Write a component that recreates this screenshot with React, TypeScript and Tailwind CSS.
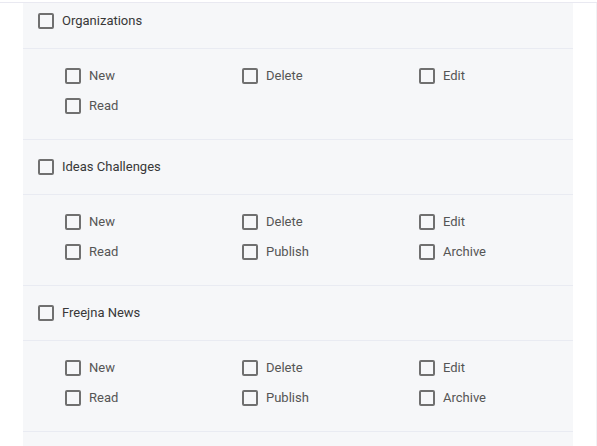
import React from 'react';

interface Section {
  title: string;
  perms: string[];
  first?: boolean;
}

const sections: Section[] = [
  { title: 'Organizations', perms: ['New', 'Delete', 'Edit', 'Read'], first: true },
  { title: 'Ideas Challenges', perms: ['New', 'Delete', 'Edit', 'Read', 'Publish', 'Archive'] },
  { title: 'Freejna News', perms: ['New', 'Delete', 'Edit', 'Read', 'Publish', 'Archive'] },
];

function Box() {
  return <span className="w-4 h-4 shrink-0 rounded-[2px] border-2 border-[#707070] bg-transparent"></span>;
}

export default function App() {
  return (
    <div
      className="w-[597px] h-[446px] overflow-hidden bg-white pt-[2px]"
      style={{ fontFamily: 'Roboto, "Liberation Sans", sans-serif' }}
    >
      <div className="border-t border-[#e9e9f1] flex">
        <div className="w-[23px]"></div>
        <div className="w-[550px] bg-[#f6f7f9]">
          {sections.map((s) => (
            <div key={s.title}>
              <div
                className={`flex gap-2 pl-[15px] border-b border-[#e9ebf2] ${
                  s.first ? 'h-[46px] items-start pt-[10px]' : 'h-[55px] items-center'
                }`}
              >
                <Box />
                <span className="text-[13px] leading-4 text-[#383838]">{s.title}</span>
              </div>
              <div className="grid grid-cols-[177px_177px_177px] pl-[42px] pt-[12px] pb-[18px] border-b border-[#e9ebf2]">
                {s.perms.map((p) => (
                  <label key={p} className="flex items-center gap-2 h-[30px]">
                    <Box />
                    <span className="text-[13px] text-[#555]">{p}</span>
                  </label>
                ))}
              </div>
            </div>
          ))}
        </div>
        <div className="flex-1"></div>
        <div className="w-px bg-[#f1f1f4] h-[446px]"></div>
      </div>
    </div>
  );
}
